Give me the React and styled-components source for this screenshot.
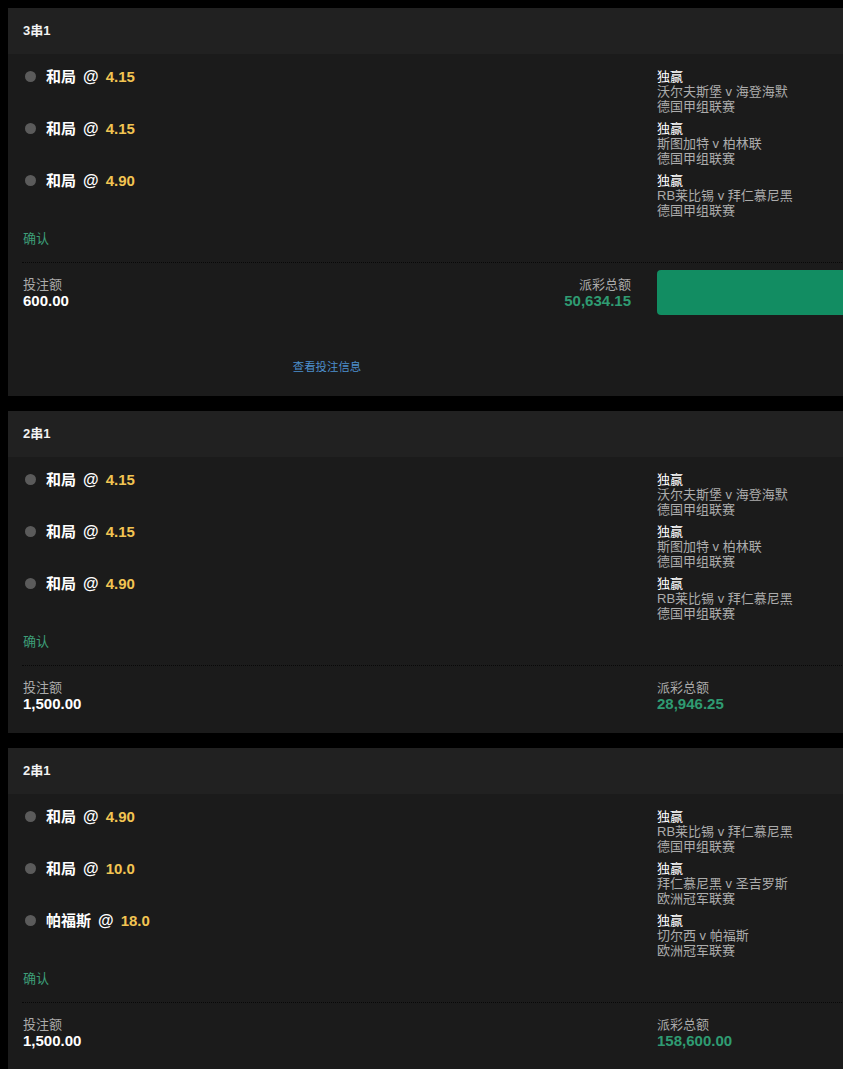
import React from "react";
import styled, { createGlobalStyle } from "styled-components";

const GlobalStyle = createGlobalStyle`
  html, body {
    margin: 0;
    padding: 0;
    background: #000;
    overflow-x: hidden;
  }
  body {
    font-family: "Liberation Sans", Arial, "Noto Sans CJK SC", sans-serif;
    color: #fff;
  }
`;

const Page = styled.div`
  padding: 8px 0 0 8px;
  overflow: hidden;
  min-height: 1069px;
  box-sizing: border-box;
`;

const Card = styled.section`
  width: 900px;
  background: #1b1b1b;
  margin-bottom: 15px;
`;

const CardHeader = styled.header`
  height: 46px;
  background: #212121;
  display: flex;
  align-items: center;
  padding-left: 15px;
  padding-bottom: 3px;
  box-sizing: border-box;
  font-size: 13px;
  font-weight: bold;
  color: #f2f2f2;
`;

const CardBody = styled.div`
  padding: 15px 0 21px 15px;
`;

const LegRow = styled.div`
  display: grid;
  grid-template-columns: 634px 1fr;
  margin-bottom: 7px;
`;

const Selection = styled.div`
  display: flex;
  align-items: center;
  height: 15px;
  padding-left: 2px;
  gap: 10px;
`;

const Bullet = styled.span`
  width: 11px;
  height: 11px;
  border-radius: 50%;
  background: #5b5b5b;
  flex: none;
`;

const Pick = styled.span`
  display: flex;
  align-items: center;
  gap: 7px;
  font-size: 15px;
  font-weight: bold;
  line-height: 15px;
  color: #fff;
`;

const At = styled.span`
  font-size: 16px;
`;

const Odds = styled.span`
  color: #f2c452;
`;

const Market = styled.div`
  font-size: 13px;
  line-height: 15px;
  color: #acacac;
`;

const MarketName = styled.div`
  color: #fff;
`;

const Confirm = styled.div`
  margin-top: 13px;
  font-size: 13px;
  line-height: 15px;
  color: #3d9e78;
`;

const Divider = styled.div`
  margin: 16px 0 0 -1px;
  border-top: 1px dotted #080808;
`;

const Summary = styled.div`
  display: grid;
  grid-template-columns: 634px 1fr;
  padding-top: 7px;
`;

const SummaryLeft = styled.div`
  display: flex;
  justify-content: space-between;
  padding-right: 26px;
  padding-top: 7px;
`;

const SummaryRight = styled.div`
  padding-top: ${(p) => (p.$button ? "0" : "7px")};
`;

const Amount = styled.div`
  text-align: ${(p) => (p.$right ? "right" : "left")};
`;

const AmountLabel = styled.div`
  font-size: 13px;
  line-height: 15px;
  color: #ababab;
`;

const AmountValue = styled.div`
  font-size: 15px;
  font-weight: bold;
  line-height: 17px;
  color: ${(p) => (p.$green ? "#2f9b72" : "#fff")};
`;

const PlaceButton = styled.button`
  display: block;
  width: 100%;
  height: 45px;
  border: 0;
  border-radius: 4px;
  background: #128d62;
  cursor: pointer;
`;

const LinkRow = styled.div`
  width: 608px;
  margin-top: 42px;
  text-align: center;
`;

const InfoLink = styled.a`
  font-size: 11.4px;
  line-height: 13px;
  color: #4d8fcc;
  text-decoration: none;
`;

const cards = [
  {
    title: "3串1",
    legs: [
      { pick: "和局", odds: "4.15", match: "沃尔夫斯堡 v 海登海默", league: "德国甲组联赛" },
      { pick: "和局", odds: "4.15", match: "斯图加特 v 柏林联", league: "德国甲组联赛" },
      { pick: "和局", odds: "4.90", match: "RB莱比锡 v 拜仁慕尼黑", league: "德国甲组联赛" },
    ],
    stake: "600.00",
    payout: "50,634.15",
    open: true,
  },
  {
    title: "2串1",
    legs: [
      { pick: "和局", odds: "4.15", match: "沃尔夫斯堡 v 海登海默", league: "德国甲组联赛" },
      { pick: "和局", odds: "4.15", match: "斯图加特 v 柏林联", league: "德国甲组联赛" },
      { pick: "和局", odds: "4.90", match: "RB莱比锡 v 拜仁慕尼黑", league: "德国甲组联赛" },
    ],
    stake: "1,500.00",
    payout: "28,946.25",
  },
  {
    title: "2串1",
    legs: [
      { pick: "和局", odds: "4.90", match: "RB莱比锡 v 拜仁慕尼黑", league: "德国甲组联赛" },
      { pick: "和局", odds: "10.0", match: "拜仁慕尼黑 v 圣吉罗斯", league: "欧洲冠军联赛" },
      { pick: "帕福斯", odds: "18.0", match: "切尔西 v 帕福斯", league: "欧洲冠军联赛" },
    ],
    stake: "1,500.00",
    payout: "158,600.00",
  },
];

function Leg({ leg }) {
  return (
    <LegRow>
      <Selection>
        <Bullet />
        <Pick>
          <span>{leg.pick}</span>
          <At>@</At>
          <Odds>{leg.odds}</Odds>
        </Pick>
      </Selection>
      <Market>
        <MarketName>独赢</MarketName>
        <div>{leg.match}</div>
        <div>{leg.league}</div>
      </Market>
    </LegRow>
  );
}

function BetCard({ card }) {
  const payout = (
    <Amount $right={card.open}>
      <AmountLabel>派彩总额</AmountLabel>
      <AmountValue $green>{card.payout}</AmountValue>
    </Amount>
  );
  return (
    <Card>
      <CardHeader>{card.title}</CardHeader>
      <CardBody>
        {card.legs.map((leg, i) => (
          <Leg key={i} leg={leg} />
        ))}
        <Confirm>确认</Confirm>
        <Divider />
        <Summary>
          <SummaryLeft>
            <Amount>
              <AmountLabel>投注额</AmountLabel>
              <AmountValue>{card.stake}</AmountValue>
            </Amount>
            {card.open && payout}
          </SummaryLeft>
          <SummaryRight $button={card.open}>
            {card.open ? <PlaceButton aria-label="投注" /> : payout}
          </SummaryRight>
        </Summary>
        {card.open && (
          <LinkRow>
            <InfoLink href="#">查看投注信息</InfoLink>
          </LinkRow>
        )}
      </CardBody>
    </Card>
  );
}

export default function App() {
  return (
    <>
      <GlobalStyle />
      <Page>
        {cards.map((c, i) => (
          <BetCard key={i} card={c} />
        ))}
      </Page>
    </>
  );
}
